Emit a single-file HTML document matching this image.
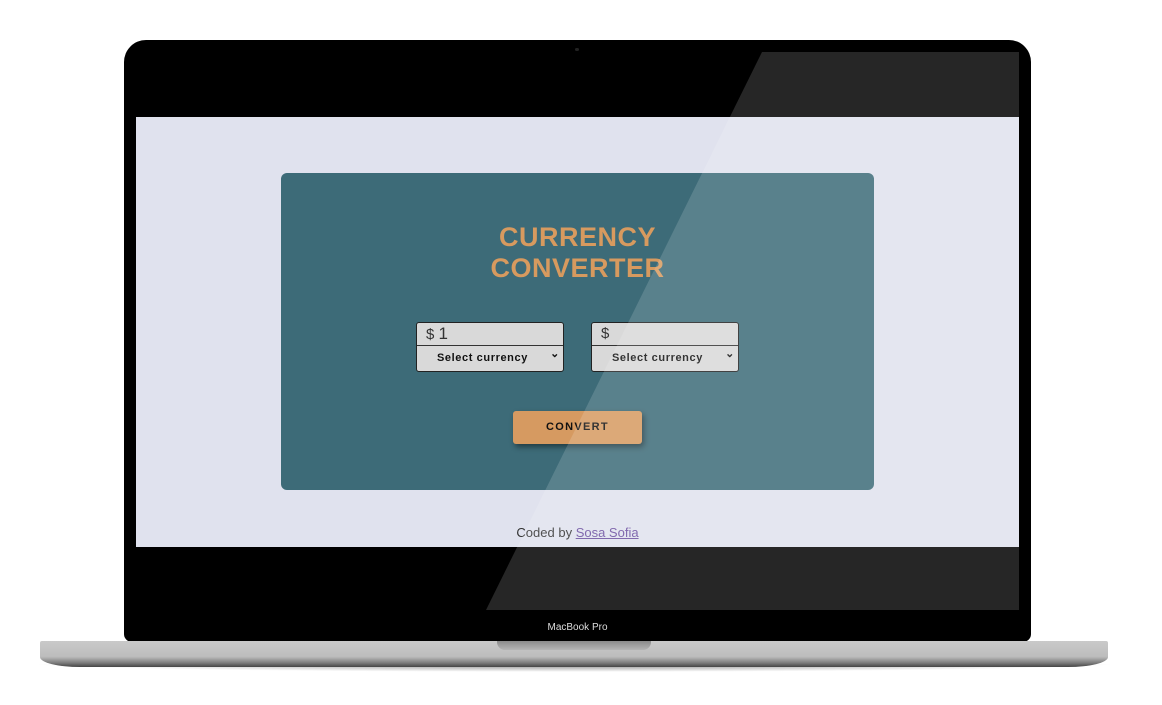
<!DOCTYPE html>
<html><head><style>
body{margin:0;width:1162px;height:705px;background:#fff;position:relative;overflow:hidden;font-family:"Liberation Sans",sans-serif}
.abs{position:absolute}
#frame{left:124px;top:40px;width:907px;height:602px;background:#000;border-radius:22px 22px 8px 8px}
#screen{left:136px;top:117px;width:883px;height:430px;background:#e0e2ee}
#panel{left:281px;top:173px;width:593px;height:317px;background:#3d6b78;border-radius:6px}
.title{left:281px;width:593px;top:222px;text-align:center;color:#d79a5f;font-weight:bold;font-size:27px;line-height:31px;letter-spacing:0.5px;font-family:"Liberation Sans",sans-serif}
.box{width:146px;height:48px;border:1px solid #222;border-radius:3px;background:#d9d9d9;overflow:hidden}
.box .in{height:22px;border-bottom:1px solid #333;font-size:15px;line-height:22px;padding-left:9px;color:#333}
.box .sel{height:25px;font-size:11px;font-weight:bold;line-height:25px;letter-spacing:.6px;padding-left:20px;color:#111;position:relative}
.box .sel:after{content:"⌄";position:absolute;right:3px;top:-4px;font-size:11px}
#btn{left:513px;top:411px;width:129px;height:33px;background:#d69a61;border-radius:3px;box-shadow:2px 3px 6px rgba(0,0,0,.45);text-align:center;line-height:33px;font-size:11px;font-weight:bold;letter-spacing:1.3px;color:#111}
#credit{left:136px;width:883px;top:525px;text-align:center;font-size:13px;color:#333}
#credit a{color:#6b4fa0;text-decoration:underline}
#base{left:40px;top:641px;width:1068px;height:26px;background:linear-gradient(#c9c9c9,#bdbdbd 60%,#7a7a7a 85%,#444);border-radius:2px 2px 40px 40px/2px 2px 10px 10px}
#notch{left:497px;top:641px;width:154px;height:9px;background:linear-gradient(#8a8a8a,#b5b5b5);border-radius:0 0 8px 8px}
#shadow{left:30px;top:664px;width:1090px;height:8px;background:radial-gradient(ellipse at 50% 0,rgba(0,0,0,.5),rgba(0,0,0,0) 70%)}
</style></head><body>
<div id="frame" class="abs"></div>
<div class="abs" style="left:575px;top:48px;width:4px;height:3px;background:#222;border-radius:2px"></div>
<div id="screen" class="abs"></div>
<div id="panel" class="abs"></div>
<div class="abs title">CURRENCY<br>CONVERTER</div>
<div class="abs box" style="left:416px;top:322px"><div class="in">$ <span style="font-size:17px">1</span></div><div class="sel">Select currency</div></div>
<div class="abs box" style="left:591px;top:322px"><div class="in">$</div><div class="sel">Select currency</div></div>
<div id="btn" class="abs">CONVERT</div>
<div id="credit" class="abs">Coded by <a>Sosa Sofia</a></div>
<svg class="abs" style="left:0;top:0" width="1162" height="705"><polygon points="762,52 1019,52 1019,610 486,610" fill="#fff" fill-opacity="0.15"/></svg>
<div class="abs" style="left:124px;width:907px;top:622px;text-align:center;color:#ddd;font-size:10px">MacBook Pro</div>
<div id="shadow" class="abs"></div>
<div id="base" class="abs"></div>
<div id="notch" class="abs"></div>
</body></html>
